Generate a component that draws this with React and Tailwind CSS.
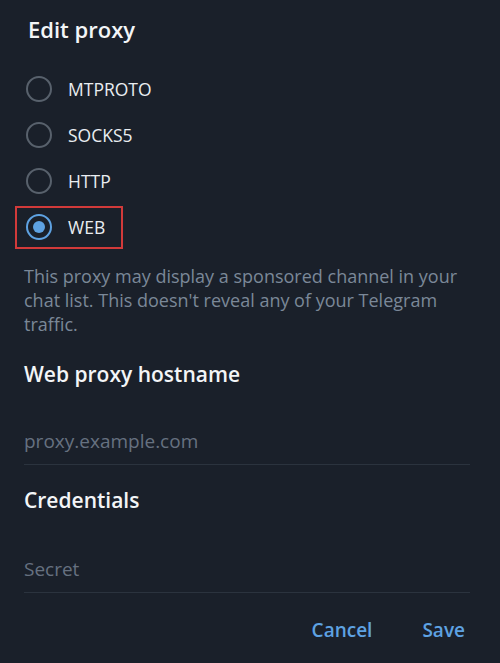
import { useState } from "react";

const options = ["MTPROTO", "SOCKS5", "HTTP", "WEB"];

function Radio({ label, checked, highlight, onClick }) {
  return (
    <div className="h-[46px] flex items-center">
      <button
        onClick={onClick}
        className={
          "flex items-center gap-[16px] h-[43px] " +
          (highlight ? "border-2 border-[#d23a3a] -ml-[11px] pl-[9px] w-[108px]" : "")
        }
      >
        <span
          className={
            "w-[26px] h-[26px] rounded-full border-2 flex items-center justify-center " +
            (checked ? "border-[#5ea2e2]" : "border-[#58616c]")
          }
        >
          {checked && <span className="w-[12px] h-[12px] rounded-full bg-[#5ea2e2]" />}
        </span>
        <span className="text-[17.5px] text-[#e9edf1]">{label}</span>
      </button>
    </div>
  );
}

export default function App() {
  const [type, setType] = useState("WEB");

  return (
    <div className="min-h-screen bg-[#1a202a] text-white font-['Open_Sans',sans-serif] px-[24px] overflow-hidden">
      <h1 className="pt-[13px] pl-[4px] text-[22px] font-semibold text-[#f3f5f7] leading-[32px]">Edit proxy</h1>

      <div className="mt-[21px] pl-[2px]">
        {options.map((o) => (
          <Radio key={o} label={o} checked={type === o} highlight={o === "WEB"} onClick={() => setType(o)} />
        ))}
      </div>

      <p className="mt-[14px] text-[18px] leading-[24px] text-[#7b8898]">
        This proxy may display a sponsored channel in your chat list. This doesn't reveal any of your Telegram
        traffic.
      </p>

      <h2 className="mt-[23px] text-[21px] font-semibold text-[#f3f5f7] leading-[30px]">Web proxy hostname</h2>
      <div className="mt-[38px] mr-[6px] border-b border-[#2b333e] pb-[9px]">
        <input
          className="w-full bg-transparent outline-none text-[19px] font-medium leading-[28px] text-[#e9edf1] placeholder:text-[#667180]"
          placeholder="proxy.example.com"
        />
      </div>

      <h2 className="mt-[20px] text-[21px] font-semibold text-[#f3f5f7] leading-[30px]">Credentials</h2>
      <div className="mt-[40px] mr-[6px] border-b border-[#2b333e] pb-[9px]">
        <input
          className="w-full bg-transparent outline-none text-[19px] font-medium leading-[28px] text-[#e9edf1] placeholder:text-[#667180]"
          placeholder="Secret"
        />
      </div>

      <div className="mt-[23px] flex justify-end gap-[50px] pr-[11px]">
        <button className="text-[19px] font-semibold text-[#5ea2e2] leading-[28px]">Cancel</button>
        <button className="text-[19px] font-semibold text-[#5ea2e2] leading-[28px]">Save</button>
      </div>
    </div>
  );
}
